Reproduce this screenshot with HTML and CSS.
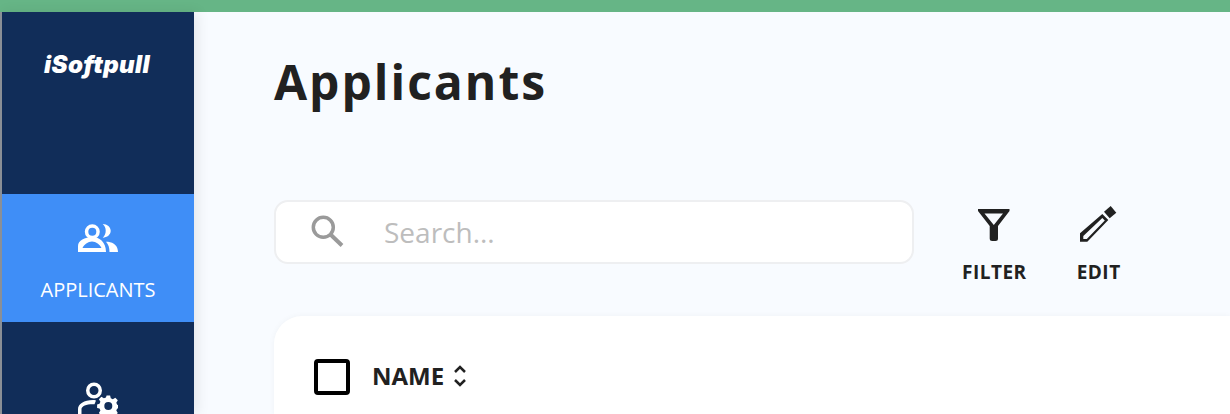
FILE: index.html
```html
<!DOCTYPE html>
<html lang="en">
<head>
    <meta charset="UTF-8">
    <meta name="viewport" content="width=device-width, initial-scale=1.0">
    <title>Applicants</title>
    <link rel="stylesheet" href="styles.css">
</head>
<body>

    <div class="topbar"></div>

    <div class="layout">
        <div class="sidebar">
            <div class="logo">iSoftpull</div>
            <div class="nav-item active">
                <svg class="nav-icon" width="40" height="28" viewBox="0 0 40 28" fill="#fff">
                    <path fill-rule="evenodd" d="M14.300 0.200a7.500 7.500 0 1 1 0 15a7.500 7.500 0 0 1 0-15zM14.300 3.700a4 4 0 1 0 0 8a4 4 0 0 0 0-8z"/>
                    <path d="M24.700 0c4.500 0 8 3 8 6.800s-3.500 6.900-8 6.900c2-1.800 3-4.200 3-6.900s-1-5-3-6.800z"/>
                    <path fill-rule="evenodd" d="M0 28v-6c0-5.500 7-9 14-9s14 4.500 14 15zM4.500 24h19c-1.500-3.500-5.500-6.500-9.500-6.500s-8 3-9.500 6.500z"/>
                    <path d="M30 17.700c6 .8 10 4.300 10 10.300h-8.500c0-4-1-7.700-3.500-10.300z"/>
                </svg>
                <span>APPLICANTS</span>
            </div>
            <div class="nav-item nav-item-cut">
                <svg class="nav-icon" width="40" height="32" viewBox="0 0 40 32" fill="#fff">
                    <path fill-rule="evenodd" d="M16 0.500a8 8 0 1 1 0 16a8 8 0 0 1 0-16zM16 4a4.500 4.500 0 1 0 0 9a4.500 4.500 0 0 0 0-9z"/>
                    <path d="M0 32v-5c0-5 6-9 15-9 1 0 2 0 3 .5l-1.500 3.800c-7-.5-13 1.700-13 4.700v5z"/>
                    <path fill-rule="evenodd" d="M28.600 13.500h3.500l.7 2.800 2 .9 2.500-1.500 2.500 2.500-1.500 2.500.9 2 .8.200v3.500l-.8.200-.9 2 1.500 2.500-2.500 2.500-2.500-1.500-2 .9-.7 2.300h-3.500l-.7-2.300-2-.9-2.500 1.500-2.500-2.500 1.500-2.500-.9-2-2.400-.7v-3.500l2.400-.6.9-2-1.500-2.500 2.500-2.500 2.500 1.500 2-.9zM30.300 20a4 4 0 1 0 0 8a4 4 0 0 0 0-8z"/>
                </svg>
            </div>
        </div>

        <div class="main">
            <h1 class="page-title">Applicants</h1>

            <div class="toolbar">
                <div class="search-box">
                    <svg class="search-icon" width="34" height="34" viewBox="0 0 34 34" fill="none" stroke="#9a9a9a">
                        <circle cx="13.300" cy="12.300" r="10" stroke-width="3.500"/>
                        <path d="M20.500 19.500l11.500 11" stroke-width="4"/>
                    </svg>
                    <span class="search-text">Search...</span>
                </div>
                <div class="tool">
                    <div class="tool-icon">
                        <svg width="32" height="32" viewBox="0 0 32 32" fill="#212121">
                            <path fill-rule="evenodd" d="M0 0h31.500v2l-11.500 15v12.500a2.500 2.500 0 0 1-2.500 2.500h-3.300a2.500 2.500 0 0 1-2.500-2.500v-12.500l-11.700-15zM6.500 4.500l9.300 11.500 9.200-11.500z"/>
                        </svg>
                    </div>
                    <span>FILTER</span>
                </div>
                <div class="tool">
                    <div class="tool-icon">
                        <svg width="38" height="38" viewBox="0 0 38 38" fill="#212121">
                            <path fill-rule="evenodd" d="M22.300 8l6 6-21 21.700h-7.300v-8.400zM22.300 12l-19 18v3h3.500l18-18.500z"/>
                            <path d="M24 5.700l6.700-5.700 5.600 6.700-6.600 5.600z"/>
                        </svg>
                    </div>
                    <span>EDIT</span>
                </div>
            </div>

            <div class="table-card">
                <div class="table-head">
                    <div class="checkbox"></div>
                    <span class="col-name">NAME</span>
                    <svg class="sort-icon" width="14" height="24" viewBox="0 0 14 24" fill="none" stroke="#212121" stroke-width="2.500">
                        <path d="M2 8l5-5 5 5"/>
                        <path d="M2 16l5 5 5-5"/>
                    </svg>
                </div>
            </div>
        </div>
    </div>

</body>
</html>
```

FILE: styles.css
```css
body {
    font-family: "Open Sans", sans-serif;
    margin: 0;
    padding: 0;
    height: 414px;
    overflow: hidden;
    background: #f8fbff;
    color: #212121;
}

.topbar {
    height: 12px;
    background: #66b586;
}

.layout {
    display: flex;
    height: 402px;
}

.sidebar {
    width: 192px;
    flex-shrink: 0;
    border-left: 2px solid #8a8f96;
    background: #112d59;
    box-shadow: 4px 0 12px rgba(0, 0, 0, 0.08);
}

.logo {
    height: 182px;
    box-sizing: border-box;
    padding: 38px 0 0 42px;
    font-family: Inter, sans-serif;
    font-size: 24px;
    font-weight: 900;
    font-style: italic;
    line-height: 30px;
    letter-spacing: 0.4px;
    color: white;
}

.nav-item {
    height: 128px;
    display: flex;
    flex-direction: column;
    align-items: center;
    color: white;
    font-size: 20px;
    box-sizing: border-box;
    padding-top: 30px;
}

.nav-item.active {
    background: #3f8ef7;
}

.nav-item-cut {
    height: 92px;
    padding-top: 60px;
}

.nav-item span {
    margin-top: 26px;
    line-height: 24px;
}

.main {
    flex: 1;
    padding-left: 80px;
}

.page-title {
    margin: 0;
    padding-top: 40px;
    font-size: 48px;
    line-height: 60px;
    font-weight: 700;
    letter-spacing: 2px;
}

.toolbar {
    display: flex;
    align-items: flex-start;
    margin-top: 88px;
}

.search-box {
    width: 640px;
    height: 64px;
    box-sizing: border-box;
    display: flex;
    align-items: center;
    padding-left: 34px;
    background: white;
    border: 2px solid #eeeff1;
    border-radius: 14px;
}

.search-text {
    margin-left: 40px;
    font-size: 28px;
    color: #bdbdbd;
}

.tool {
    display: flex;
    flex-direction: column;
    align-items: center;
    font-size: 19px;
    font-weight: 700;
    letter-spacing: 0.5px;
}

.tool:nth-child(2) {
    margin-left: 48px;
}

.tool:nth-child(3) {
    margin-left: 50px;
}

.tool-icon {
    display: flex;
    justify-content: center;
    align-items: center;
    height: 38px;
    margin-top: 6px;
}

.tool span {
    margin-top: 16px;
    line-height: 24px;
}

.table-card {
    margin-top: 32px;
    height: 98px;
    background: white;
    border-radius: 28px 0 0 0;
    box-shadow: 0 0 6px rgba(0, 0, 0, 0.04);
}

.table-head {
    display: flex;
    align-items: center;
    padding: 43px 0 0 40px;
}

.checkbox {
    width: 36px;
    height: 36px;
    box-sizing: border-box;
    border: 4px solid black;
    border-radius: 4px;
}

.col-name {
    margin: 0 9px 3px 22px;
    font-size: 24px;
    font-weight: 700;
}

.sort-icon {
    margin-bottom: 2px;
}
```
